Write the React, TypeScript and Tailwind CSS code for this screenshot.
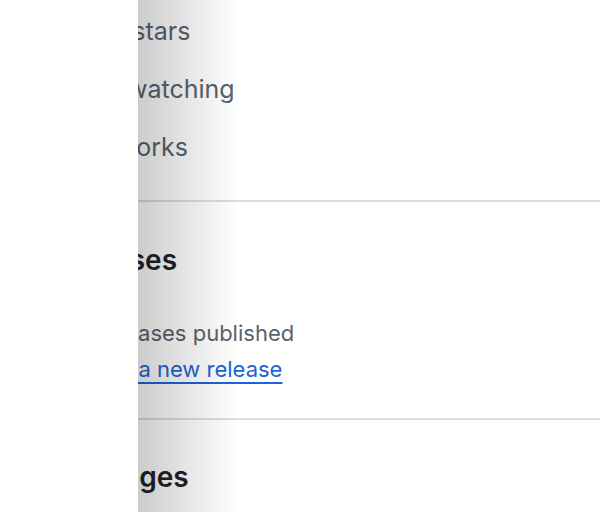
import {Star, Eye, GitFork} from "lucide-react";

const stats = [
  {icon: Star, count: "11", label: "stars"},
  {icon: Eye, count: "8", label: "watching"},
  {icon: GitFork, count: "4", label: "forks"},
];

export default function App() {
  return (
    <div className="relative w-[600px] h-[512px] overflow-hidden bg-white" style={{fontFamily: "Inter, 'Liberation Sans', sans-serif"}}>
      <div className="flex flex-col pl-[63px] pt-[3px]">
        {stats.map((s) => (
          <div key={s.label} className="flex items-center gap-[14px] h-[58px] text-[25px] text-[#59636e]">
            <s.icon size={27} strokeWidth={1.6}/>
            <span><strong className="font-semibold">{s.count}</strong> {s.label}</span>
          </div>
        ))}
        <div className="h-[2px] bg-[#d8dee4] mt-[23px] -ml-[63px]"/>
        <h2 className="mt-[38px] -ml-[8px] text-[28px] leading-[40px] font-semibold text-[#1f2328]">Releases</h2>
        <p className="mt-[35px] text-[22px] leading-[36px] text-[#59636e]">No releases published</p>
        <a href="#" className="text-[22px] leading-[36px] text-[#1c64d6] underline underline-offset-[5px] decoration-[2px] w-fit">Create a new release</a>
        <div className="h-[2px] bg-[#d8dee4] mt-[31px] -ml-[63px]"/>
        <h2 className="mt-[37px] -ml-[6px] text-[28px] leading-[40px] font-semibold text-[#1f2328]">Packages</h2>
      </div>
      <div className="absolute left-0 top-0 bottom-0 w-[138px] bg-white"/>
      <div className="absolute left-[138px] top-0 bottom-0 w-[100px] bg-gradient-to-r from-black/20 to-transparent"/>
    </div>
  );
}
